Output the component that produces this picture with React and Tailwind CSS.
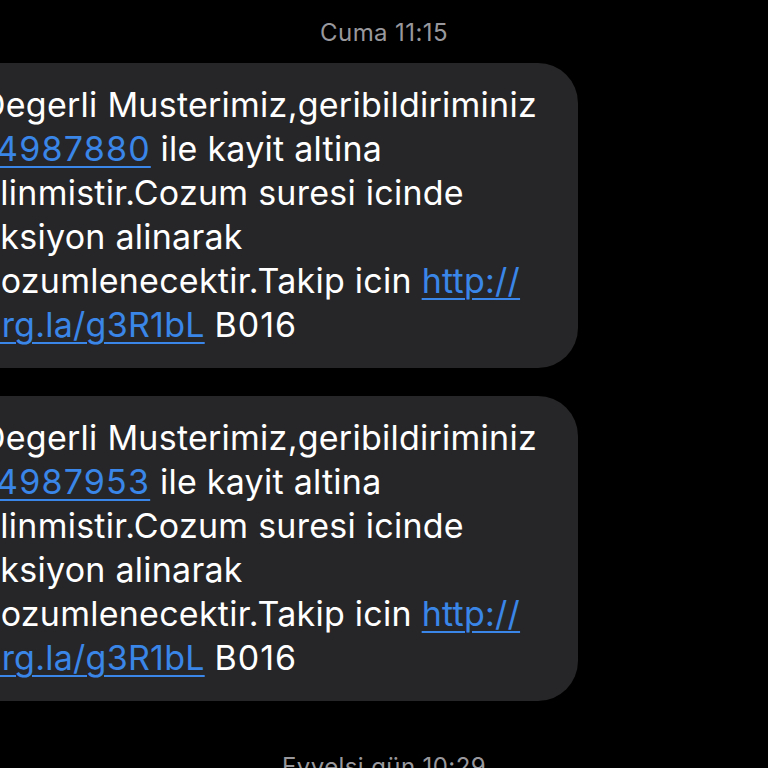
const MESSAGES = [
  { ref: '14987880' },
  { ref: '14987953' },
]

function Link({ children, className = '' }) {
  return (
    <span className={`text-[#3a86e8] underline decoration-2 underline-offset-[5px] ${className}`}>
      {children}
    </span>
  )
}

function Bubble({ refNo }) {
  return (
    <div className="-ml-[40px] w-[618px] rounded-[40px] bg-[#262628] pl-[21px] pt-[20px] pb-[21px] text-[34px] leading-[44px] tracking-[0.25px] text-white whitespace-nowrap">
      Degerli Musterimiz,geribildiriminiz
      <br />
      <Link className="tracking-[1.2px]">{refNo}</Link> ile kayit altina
      <br />
      alinmistir.Cozum suresi icinde
      <br />
      aksiyon alinarak
      <br />
      cozumlenecektir.Takip icin <Link>http://</Link>
      <br />
      <Link>org.la/g3R1bL</Link> <span className="tracking-[1px]">B016</span>
    </div>
  )
}

export default function App() {
  return (
    <div className="w-[768px] h-[768px] overflow-hidden bg-black font-['Inter','Roboto',sans-serif]">
      <div className="pt-[20px] text-center text-[24px] leading-[26px] tracking-[0.4px] text-[#98989d]">
        Cuma 11:15
      </div>

      <div className="mt-[17px] flex flex-col gap-[28px]">
        {MESSAGES.map((m) => (
          <Bubble key={m.ref} refNo={m.ref} />
        ))}
      </div>

      <div className="mt-[53px] text-center text-[24px] leading-[26px] tracking-[0.4px] text-[#98989d]">
        Evvelsi gün 10:29
      </div>
    </div>
  )
}
